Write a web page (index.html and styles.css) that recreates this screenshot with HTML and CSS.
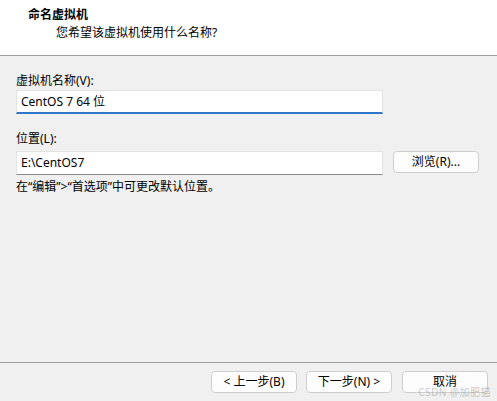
FILE: index.html
```html
<!DOCTYPE html>
<html lang="zh-CN">
<head>
<meta charset="utf-8">
<link rel="stylesheet" href="styles.css">
</head>
<body>
<div class="dialog">
  <div class="header">
    <div class="title">命名虚拟机</div>
    <div class="subtitle">您希望该虚拟机使用什么名称?</div>
  </div>
  <div class="content">
    <div class="label">虚拟机名称(V):</div>
    <div class="input active">CentOS 7 64 位</div>
    <div class="label second">位置(L):</div>
    <div class="row">
      <div class="input path">E:\CentOS7</div>
      <div class="btn browse">浏览(R)...</div>
    </div>
    <div class="hint">在“编辑”&gt;“首选项”中可更改默认位置。</div>
  </div>
  <div class="footer">
    <div class="btn nav">&lt; 上一步(B)</div>
    <div class="btn nav">下一步(N) &gt;</div>
    <div class="btn nav cancel">取消</div>
    <div class="watermark">CSDN @加肥猫</div>
  </div>
</div>
</body>
</html>
```
FILE: styles.css
```css
html, body {
  margin: 0;
  padding: 0;
  background: #f0f0f0;
}
body {
  font-family: "Noto Sans", "Noto Sans CJK SC", sans-serif;
  font-size: 12px;
  color: #000;
}
.dialog {
  width: 497px;
  height: 401px;
  display: flex;
  flex-direction: column;
  overflow: hidden;
}
.header {
  height: 56px;
  box-sizing: border-box;
  background: #fff;
  border-bottom: 1px solid #a0a0a0;
  padding-top: 7px;
}
.title {
  font-weight: bold;
  line-height: 16px;
  margin-left: 28px;
}
.subtitle {
  line-height: 16px;
  margin-top: 2px;
  margin-left: 56px;
}
.content {
  padding: 17px 14px 0 16px;
  display: flex;
  flex-direction: column;
}
.label {
  line-height: 16px;
}
.label.second {
  margin-top: 17px;
  margin-bottom: 4px;
}
.input {
  box-sizing: border-box;
  width: 367px;
  height: 24px;
  margin-top: 1px;
  background: #fff;
  border: 1px solid #e3e3e3;
  border-bottom: 1px solid #8a8a8a;
  padding: 0 4px;
  line-height: 22px;
  font-size: 12px;
}
.input.active {
  border-bottom: 2px solid #2f78c8;
  line-height: 21px;
}
.row {
  display: flex;
  align-items: flex-start;
  gap: 10px;
}
.input.path {
  margin-top: 0;
}
.btn {
  box-sizing: border-box;
  background: #fdfdfd;
  border: 1px solid #cfcfcf;
  border-radius: 4px;
  text-align: center;
  line-height: 20px;
  height: 22px;
}
.browse {
  width: 86px;
}
.hint {
  margin-top: 4px;
  line-height: 16px;
}
.footer {
  margin-top: auto;
  height: 39px;
  box-sizing: border-box;
  border-top: 1px solid #a0a0a0;
  display: flex;
  justify-content: flex-end;
  align-items: flex-start;
  padding: 8px 9px 0 0;
  gap: 9px;
  position: relative;
}
.nav {
  width: 86px;
  height: 22px;
}
.cancel {
  margin-left: 1px;
}
.watermark {
  position: absolute;
  right: 6px;
  bottom: 3px;
  font-size: 10px;
  line-height: 12px;
  color: rgba(150, 150, 150, 0.5);
  letter-spacing: 0.5px;
}
```
